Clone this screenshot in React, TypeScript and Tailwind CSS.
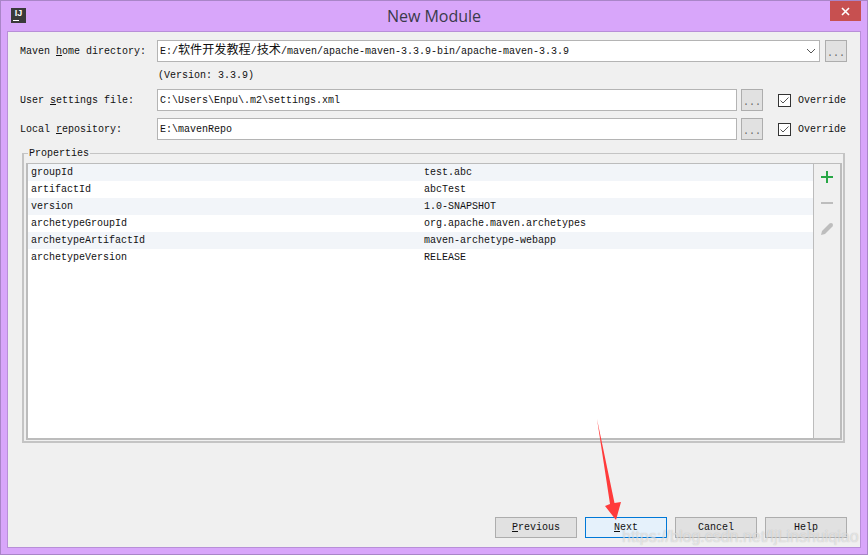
import React from 'react';

const mono = "font-['Liberation_Mono','Noto_Sans_CJK_SC',monospace] text-[10px] text-[#111]";

const properties = [
    ['groupId', 'test.abc'],
    ['artifactId', 'abcTest'],
    ['version', '1.0-SNAPSHOT'],
    ['archetypeGroupId', 'org.apache.maven.archetypes'],
    ['archetypeArtifactId', 'maven-archetype-webapp'],
    ['archetypeVersion', 'RELEASE'],
];

const DotsButton = () => (
    <button className="w-[22px] h-[22px] shrink-0 bg-[#e1e1e1] border border-[#adadad] flex items-center justify-center pt-1 text-[10px] text-[#666] font-['Liberation_Mono',monospace]">
        ...
    </button>
);

const Override = () => (
    <label className={`ml-[15px] flex items-center gap-[7px] ${mono}`}>
        <span className="w-[13px] h-[13px] border border-[#333] bg-white flex items-center justify-center">
            <svg width="11" height="11" viewBox="0 0 11 11" fill="none" stroke="#555" strokeWidth="1">
                <path d="M1.5 5.5 L4 8 L9.5 2.5" />
            </svg>
        </span>
        Override
    </label>
);

const TextInput = ({ value }: { value: string }) => (
    <div className={`w-[580px] h-[22px] bg-white border border-[#b4b4b4] flex items-center pl-[2px] ${mono}`}>{value}</div>
);

const FooterButton = ({ children, focused }: { children: React.ReactNode; focused?: boolean }) => (
    <button
        className={`w-[82px] h-[21px] border flex items-center justify-center ${mono} ${
            focused ? 'bg-[#e5f1fb] border-[#0078d7]' : 'bg-[#e1e1e1] border-[#adadad]'
        }`}
    >
        {children}
    </button>
);

export default function App() {
    return (
        <div className="relative w-[868px] h-[555px] overflow-hidden bg-[#d8a6fa] border border-[#a985c8] flex flex-col">
            <div className="h-[30px] shrink-0 relative flex items-center justify-center">
                <span className="absolute left-[10px] top-[7px] w-[15px] h-[15px] bg-[#3a3a3a] text-white text-[9px] leading-[11px] font-bold text-center font-['Liberation_Sans',sans-serif]">
                    IJ
                    <span className="absolute left-[2px] bottom-[2px] w-[6px] h-px bg-white" />
                </span>
                <span className="text-[16px] text-[#3a3a4a] font-['Open_Sans',sans-serif] mt-[-1px]">New Module</span>
                <span className="absolute right-[6px] top-0 w-[31px] h-[20px] bg-[#c75050] flex items-center justify-center">
                    <svg width="9" height="9" viewBox="0 0 9 9" stroke="white" strokeWidth="1.6">
                        <path d="M1 1 L8 8 M8 1 L1 8" />
                    </svg>
                </span>
            </div>

            <div className="mx-[6px] mb-[6px] flex-1 bg-[#f0f0f0] border border-[#b88fd8] pt-[8px] pl-[12px] pr-[13px] flex flex-col">
                <div className="flex items-center">
                    <span className={`w-[137px] ${mono}`}>
                        Maven <u>h</u>ome directory:
                    </span>
                    <div className={`w-[663px] h-[22px] bg-white border border-[#b4b4b4] flex items-center pl-[2px] ${mono}`}>
                        <span className="flex-1">
                            E:/<span className="text-[12.125px]">软件开发教程</span>/<span className="text-[12.125px]">技术</span>/maven/apache-maven-3.3.9-bin/apache-maven-3.3.9
                        </span>
                        <svg className="mr-[3px]" width="10" height="6" viewBox="0 0 10 6" fill="none" stroke="#555" strokeWidth="1">
                            <path d="M1 1 L5 5 L9 1" />
                        </svg>
                    </div>
                    <div className="ml-[5px]">
                        <DotsButton />
                    </div>
                </div>

                <div className={`h-[27px] pl-[138px] flex items-center ${mono}`}>(Version: 3.3.9)</div>

                <div className="flex items-center">
                    <span className={`w-[137px] ${mono}`}>
                        User <u>s</u>ettings file:
                    </span>
                    <TextInput value="C:\Users\Enpu\.m2\settings.xml" />
                    <div className="ml-[4px]">
                        <DotsButton />
                    </div>
                    <Override />
                </div>

                <div className="flex items-center mt-[7px]">
                    <span className={`w-[137px] ${mono}`}>
                        Local <u>r</u>epository:
                    </span>
                    <TextInput value="E:\mavenRepo" />
                    <div className="ml-[4px]">
                        <DotsButton />
                    </div>
                    <Override />
                </div>

                <fieldset className="mt-[6px] ml-[2px] mr-[2px] h-[297px] border-2 border-[#c4c4c4] border-t-[1px] pl-[2px] pr-[1px]">
                    <legend className={`ml-[2px] px-[1px] ${mono}`}>Properties</legend>
                    <div className="mt-[2px] h-[277px] border-2 border-t-[1px] border-[#bcbcbc] flex">
                        <div className="flex-1 bg-white">
                            {properties.map(([name, value], i) => (
                                <div key={name} className={`h-[17px] flex items-center pl-[3px] ${i % 2 === 0 ? 'bg-[#f2f5f9]' : 'bg-white'} ${mono}`}>
                                    <span className="w-[393px]">{name}</span>
                                    <span>{value}</span>
                                </div>
                            ))}
                        </div>
                        <div className="w-[27px] bg-[#f0f0f0] border-l border-[#bcbcbc] flex flex-col items-center pt-[6px] gap-[12px]">
                            <svg width="14" height="14" viewBox="0 0 14 14" stroke="#28a745" strokeWidth="2">
                                <path d="M1 7 H13 M7 1 V13" />
                            </svg>
                            <svg width="14" height="14" viewBox="0 0 14 14" stroke="#bdbdbd" strokeWidth="2">
                                <path d="M1 7 H13" />
                            </svg>
                            <svg width="14" height="14" viewBox="0 0 14 14" fill="#bdbdbd">
                                <path d="M1 13 L2 9 L9.5 1.5 Q11 0.5 12.5 1.5 Q13.5 3 12.5 4.5 L5 12 Z" />
                            </svg>
                        </div>
                    </div>
                </fieldset>

                <div className="mt-auto mb-[9px] flex justify-end gap-[8px]">
                    <FooterButton>
                        <u>P</u>revious
                    </FooterButton>
                    <FooterButton focused>
                        <u>N</u>ext
                    </FooterButton>
                    <FooterButton>Cancel</FooterButton>
                    <FooterButton>Help</FooterButton>
                </div>
            </div>

            {/* annotation arrow and watermark sit over the dialog */}
            <svg className="absolute left-[590px] top-[414px]" width="40" height="110" viewBox="0 0 40 110" fill="#ff3b3b">
                <path d="M6 4 L23.5 88 L30 87 L25 105 L14 91 L19 89 Z" />
            </svg>
            <span className="absolute left-[621px] top-[524px] text-[16px] text-white/55 [text-shadow:0_0_1px_rgba(90,90,90,0.4)] font-['Liberation_Sans',sans-serif] whitespace-nowrap">
                https://blog.csdn.net/IjLinshuiqiao
            </span>
        </div>
    );
}
